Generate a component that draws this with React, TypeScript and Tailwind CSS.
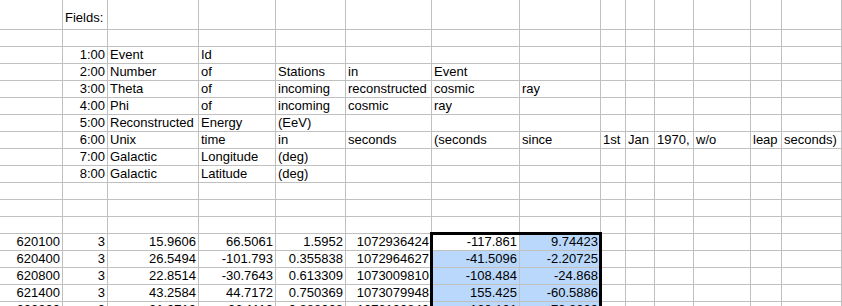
const COLS = 15;

const sheet: string[][] = [
  ["", "Fields:"],
  [],
  ["", "1:00", "Event", "Id"],
  ["", "2:00", "Number", "of", "Stations", "in", "Event"],
  ["", "3:00", "Theta", "of", "incoming", "reconstructed", "cosmic", "ray"],
  ["", "4:00", "Phi", "of", "incoming", "cosmic", "ray"],
  ["", "5:00", "Reconstructed", "Energy", "(EeV)"],
  ["", "6:00", "Unix", "time", "in", "seconds", "(seconds", "since", "1st", "Jan", "1970,", "w/o", "leap", "seconds)"],
  ["", "7:00", "Galactic", "Longitude", "(deg)"],
  ["", "8:00", "Galactic", "Latitude", "(deg)"],
  [],
  [],
  [],
  ["620100", "3", "15.9606", "66.5061", "1.5952", "1072936424", "-117.861", "9.74423"],
  ["620400", "3", "26.5494", "-101.793", "0.355838", "1072964627", "-41.5096", "-2.20725"],
  ["620800", "3", "22.8514", "-30.7643", "0.613309", "1073009810", "-108.484", "-24.868"],
  ["621400", "3", "43.2584", "44.7172", "0.750369", "1073079948", "155.425", "-60.5886"],
  ["622300", "3", "21.9713", "36.1113", "0.888068", "1073130840", "120.101", "73.3309"],
];

const isNumber = (s: string) => /^-?[\d.:]+$/.test(s);

function Cell({ text, row, col }: { text: string; row: number; col: number }) {
  const selected = row >= 13 && (col === 6 || col === 7) && !(row === 13 && col === 6);
  return (
    <div
      className={`border-r border-b border-[#c0c0c0] px-[2px] leading-[16px] whitespace-nowrap ${
        row === 0 ? "h-[30px] pt-[10px]" : "h-[17px]"
      } ${isNumber(text) ? "text-right" : "text-left"} ${selected ? "bg-[#b9d8fb]" : "bg-white"}`}
    >
      {text}
    </div>
  );
}

export default function App() {
  return (
    <div className="relative w-[842px] h-[306px] overflow-hidden bg-white text-black text-[13px] font-['Liberation_Sans',Arial,sans-serif]">
      <div className="grid w-[962px] grid-cols-[63px_45px_91px_77px_70px_86px_88px_81px_25px_29px_39px_57px_31px_60px_120px]">
        {sheet.map((r, ri) =>
          Array.from({ length: COLS }).map((_, ci) => (
            <Cell key={`${ri}-${ci}`} text={r[ci] ?? ""} row={ri} col={ci} />
          ))
        )}
      </div>

      {/* selection outline */}
      <div className="absolute left-[430px] top-[232px] w-[172px] h-[120px] border-[3px] border-black pointer-events-none" />
    </div>
  );
}
